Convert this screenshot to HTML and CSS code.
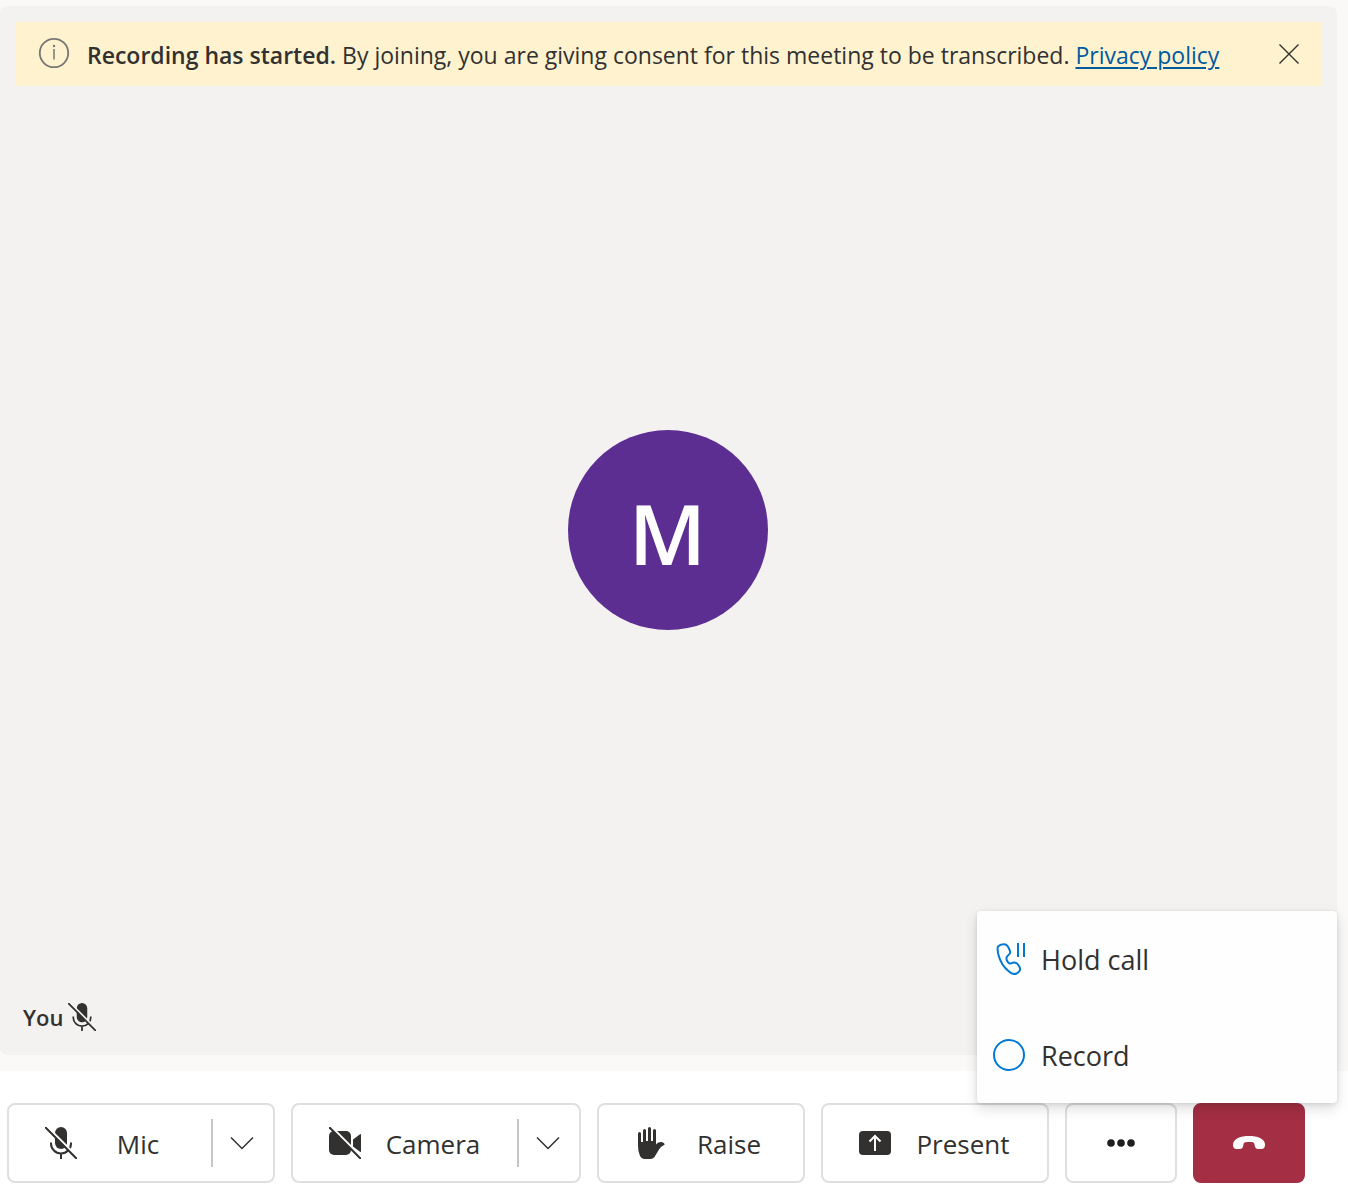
FILE: index.html
```html
<!DOCTYPE html>
<html lang="en">
<head>
<meta charset="utf-8">
<meta name="viewport" content="width=device-width, initial-scale=1">
<title>Meeting</title>
<link rel="stylesheet" href="styles.css">
</head>
<body>
<svg class="defs" aria-hidden="true">
  <defs>
    <mask id="slash-gap" maskUnits="userSpaceOnUse" x="0" y="0" width="32" height="32">
      <rect width="32" height="32" fill="#fff"/>
      <path d="M0 -2.400L34 31.600" stroke="#000" stroke-width="2.400"/>
    </mask>
    <symbol id="mic-off" viewBox="0 0 32 32">
      <g mask="url(#slash-gap)">
        <rect x="10" y="0" width="12" height="22" rx="6" fill="currentColor"/>
        <path d="M6 15.500v1a10 10 0 0 0 20 0v-1M16 27v5" fill="none" stroke="currentColor" stroke-width="2"/>
      </g>
      <path d="M.8 .8L31.200 31.200" stroke="currentColor" stroke-width="2" stroke-linecap="round"/>
    </symbol>
    <symbol id="chevron" viewBox="0 0 24 14">
      <path d="M1 1.500L12 12.500L23 1.500" fill="none" stroke="currentColor" stroke-width="1.500"/>
    </symbol>
  </defs>
</svg>
<main class="stage">
  <section class="tile" aria-label="Your video">
    <div class="notice" role="status">
      <svg class="notice-icon" viewBox="0 0 32 32" aria-hidden="true">
        <circle cx="16" cy="16" r="14.200" fill="none" stroke="currentColor" stroke-width="1.800"/>
        <path d="M16 12v10.500" stroke="currentColor" stroke-width="1.500"/>
        <circle cx="16" cy="9" r="1.200" fill="currentColor"/>
      </svg>
      <p class="notice-text"><strong>Recording has started.</strong> By joining, you are giving consent for this meeting to be transcribed. <a href="#privacy">Privacy policy</a></p>
      <button class="notice-close" type="button" aria-label="Dismiss">
        <svg class="icon-close" viewBox="0 0 20 20" aria-hidden="true"><path d="M.5 .5L19.500 19.500M19.500 .5L.5 19.500" stroke="currentColor" stroke-width="1.400"/></svg>
      </button>
    </div>
    <div class="avatar">M</div>
    <div class="name">You <svg class="name-icon" aria-hidden="true"><use href="#mic-off"/></svg></div>
  </section>
</main>
<footer class="controls">
  <div class="control split">
    <button class="control-main" type="button">
      <svg class="icon" aria-hidden="true"><use href="#mic-off"/></svg>
      <span class="label label-mic">Mic</span>
    </button>
    <button class="control-arrow" type="button" aria-label="Microphone options"><svg class="icon-chevron" aria-hidden="true"><use href="#chevron"/></svg></button>
  </div>
  <div class="control split">
    <button class="control-main" type="button">
      <svg class="icon" viewBox="0 0 32 32" aria-hidden="true">
        <g mask="url(#slash-gap)" fill="currentColor">
          <rect x="0" y="4" width="22" height="24" rx="5"/>
          <path d="M24 12.500L31 7.200q1-.6 1 .6v16.400q0 1.200-1 .6L24 19.500z"/>
        </g>
        <path d="M.8 .8L31.200 31.200" stroke="currentColor" stroke-width="2" stroke-linecap="round"/>
      </svg>
      <span class="label label-long">Camera</span>
    </button>
    <button class="control-arrow" type="button" aria-label="Camera options"><svg class="icon-chevron" aria-hidden="true"><use href="#chevron"/></svg></button>
  </div>
  <button class="control control-main" type="button">
    <svg class="icon" viewBox="0 0 32 32" aria-hidden="true">
      <path fill="currentColor" d="M3 6.500a1.500 1.500 0 0 1 3 0V15h2V3.500a1.500 1.500 0 0 1 3 0V14h2V1.500a1.500 1.500 0 0 1 3 0V14h2V3.500a1.500 1.500 0 0 1 3 0V17.500C23 15.500 25 14.800 27 15.200C28.500 15.500 30 16.500 29.500 17.800C28 18.600 26 19.500 24 22.500L19.500 30Q18 32 15.500 32H9Q6.500 32 5 29Q3 24.500 3 19z"/>
    </svg>
    <span class="label">Raise</span>
  </button>
  <button class="control control-main" type="button">
    <svg class="icon" viewBox="0 0 32 32" aria-hidden="true">
      <rect x="0" y="4" width="32" height="24" rx="4" fill="currentColor"/>
      <path d="M16 24V9M10.500 14.500L16 9L21.500 14.500" fill="none" stroke="#fff" stroke-width="2"/>
    </svg>
    <span class="label label-long">Present</span>
  </button>
  <button class="control compact" type="button" aria-label="More options" aria-expanded="true">
    <svg class="icon" viewBox="0 0 32 32" aria-hidden="true"><g fill="#201f1e"><circle cx="6" cy="16" r="3.800"/><circle cx="16" cy="16" r="3.800"/><circle cx="26" cy="16" r="3.800"/></g></svg>
  </button>
  <button class="control compact leave" type="button" aria-label="Leave">
    <svg class="icon" viewBox="0 0 32 32" aria-hidden="true"><path fill="currentColor" d="M16 9C8 9 0 11.500 0 17.500C0 21 1.500 22 4 22H6.500C9 22 9.800 21 10.300 18.500C10.700 15.500 11 15 16 15S21.300 15.500 21.700 18.500C22.200 21 23 22 25.500 22H28C30.500 22 32 21 32 17.500C32 11.500 24 9 16 9z"/></svg>
  </button>
  <div class="menu" role="menu">
    <button class="menu-item" type="button" role="menuitem">
      <svg class="icon" viewBox="0 0 32 32" aria-hidden="true"><g fill="none" stroke="currentColor" stroke-width="2">
        <path d="M5 3.500Q8 .4 12.500 1.500C15 2.300 15.800 5 17 8C17.700 10 16.500 11.500 15 12.500C13 14 13 15.500 14 17.500C15.500 21 17 21.200 20 19.700C22 19 23.500 19.500 25 21.500L26.500 24Q28 26.500 26 28.700C22.500 32.500 19.500 31.500 16 28.500C11 24.500 7 18 5.500 12Q4 6 5 3.500z"/>
        <path d="M25 0v14M31 0v14"/>
      </g></svg>
      <span>Hold call</span>
    </button>
    <button class="menu-item" type="button" role="menuitem">
      <svg class="icon" viewBox="0 0 32 32" aria-hidden="true"><circle cx="16" cy="16" r="15" fill="none" stroke="currentColor" stroke-width="2"/></svg>
      <span>Record</span>
    </button>
  </div>
</footer>
</body>
</html>
```
FILE: styles.css
```css
* {
  box-sizing: border-box;
}

body {
  margin: 0;
  min-height: 100vh;
  display: flex;
  flex-direction: column;
  background: #fff;
  color: #323130;
  font-family: "Segoe UI", "Open Sans", "Noto Sans", sans-serif;
  font-size: 23px;
  line-height: 32px;
}

button {
  margin: 0;
  padding: 0;
  border: 0;
  background: none;
  color: inherit;
  font: inherit;
  cursor: pointer;
}

svg {
  display: block;
  flex: none;
}

.defs {
  position: absolute;
  width: 0;
  height: 0;
}

.icon {
  width: 32px;
  height: 32px;
}

.stage {
  flex: 1;
  display: flex;
  padding: 6px 11px 16px 0;
  background: #faf9f8;
}

.tile {
  position: relative;
  flex: 1;
  display: flex;
  align-items: center;
  justify-content: center;
  padding: 0 2px 2px 0;
  border-radius: 8px;
  background: #f3f2f1;
}

.notice {
  position: absolute;
  top: 16px;
  left: 15px;
  right: 15px;
  display: flex;
  align-items: flex-start;
  min-height: 64px;
  padding: 15px 16px 14px 23px;
  background: #fff2cf;
}

.notice-icon {
  width: 32px;
  height: 32px;
  color: #797775;
}

.notice-text {
  flex: 1;
  margin: 2px 0 0 17px;
}

.notice-text strong {
  font-weight: 650;
}

.notice-text a {
  color: #005a9e;
  text-underline-offset: 3px;
}

.notice-close {
  display: grid;
  place-items: center;
  width: 34px;
  height: 34px;
}

.icon-close {
  width: 20px;
  height: 20px;
}

.avatar {
  width: 200px;
  height: 200px;
  padding-top: 3px;
  border-radius: 50%;
  background: #5c2e91;
  color: #fff;
  font-size: 84px;
  font-weight: 600;
  line-height: 200px;
  text-align: center;
}

.name {
  position: absolute;
  left: 23px;
  bottom: 22px;
  display: flex;
  align-items: center;
  gap: 5px;
  font-size: 22px;
  font-weight: 600;
}

.name-icon {
  width: 28px;
  height: 28px;
}

.controls {
  position: relative;
  display: flex;
  gap: 16px;
  padding: 32px 8px 21px 7px;
}

.control {
  height: 80px;
  border: 2px solid #dfdfdf;
  border-radius: 8px;
  background: #fff;
  font-size: 26px;
}

.split {
  display: flex;
  align-items: center;
}

.control-main {
  display: flex;
  align-items: center;
  gap: 24px;
  padding: 0 36px;
}

.split .control-main {
  height: 76px;
}

.label {
  width: 76px;
  padding-top: 2px;
  text-align: center;
}

.label-mic {
  width: 74px;
}

.label-long {
  width: 96px;
}

.control-arrow {
  display: grid;
  place-items: center;
  width: 62px;
  height: 48px;
  padding-right: 2px;
  border-left: 2px solid #c8c6c4;
}

.icon-chevron {
  width: 24px;
  height: 14px;
}

.compact {
  display: grid;
  place-items: center;
  width: 112px;
}

.leave {
  border-color: #a42e43;
  background: #a42e43;
  color: #fff;
}

.menu {
  position: absolute;
  right: 11px;
  bottom: 101px;
  width: 360px;
  border-radius: 4px;
  background: #fefefe;
  box-shadow: 0 6px 14px rgba(0, 0, 0, 0.13), 0 1px 4px rgba(0, 0, 0, 0.11);
}

.menu-item {
  display: flex;
  align-items: center;
  gap: 16px;
  width: 100%;
  height: 96px;
  padding: 0 16px;
  font-size: 27px;
}

.menu-item span {
  padding-top: 2px;
}

.menu-item .icon {
  color: #0078d4;
}
```
